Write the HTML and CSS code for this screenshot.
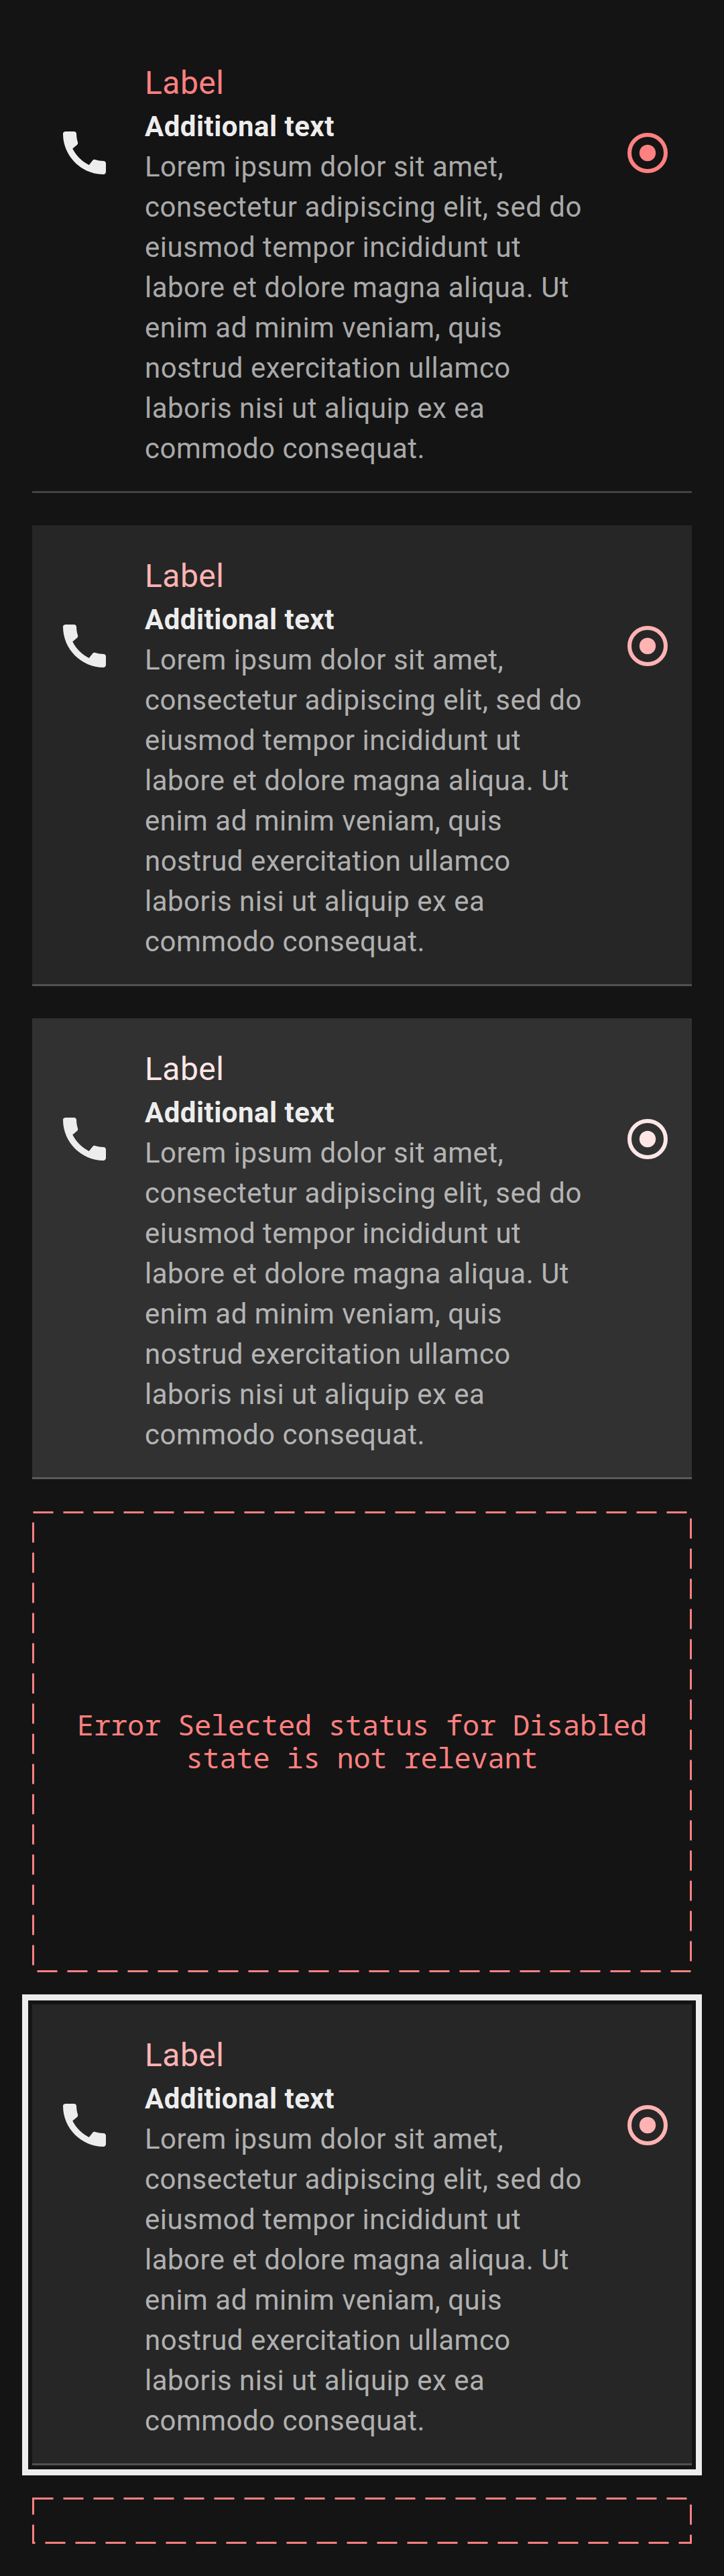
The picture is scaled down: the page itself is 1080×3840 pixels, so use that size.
FILE: index.html
```html
<!DOCTYPE html>
<html lang="en">
<head>
<meta charset="utf-8">
<title>List item states</title>
<link rel="stylesheet" href="styles.css">
</head>
<body>
<svg class="sprite" aria-hidden="true">
  <symbol id="call" viewBox="3 3 18 18"><path d="M20.01 15.38c-1.23 0-2.42-.2-3.53-.56-.35-.12-.74-.03-1.01.24l-1.57 1.97c-2.83-1.35-5.48-3.9-6.89-6.83l1.95-1.66c.27-.28.35-.67.24-1.02-.37-1.11-.56-2.3-.56-3.53 0-.54-.45-.99-.99-.99H4.19C3.65 3 3 3.24 3 3.99 3 13.28 10.73 21 20.01 21c.71 0 .99-.63.99-1.18v-3.45c0-.54-.45-.99-.99-.99z"/></symbol>
  <symbol id="radio" viewBox="0 0 60 60"><circle cx="30" cy="30" r="27" fill="none" stroke="currentColor" stroke-width="6"/><circle cx="30" cy="30" r="12.2"/></symbol>
</svg>
<main class="list">
  <article class="item item--enabled">
    <div class="item__start"><svg class="icon-call"><use href="#call"/></svg></div>
    <div class="item__text">
      <div class="label">Label</div>
      <div class="additional">Additional text</div>
      <p class="description">Lorem ipsum dolor sit amet,<br>consectetur adipiscing elit, sed do<br>eiusmod tempor incididunt ut<br>labore et dolore magna aliqua. Ut<br>enim ad minim veniam, quis<br>nostrud exercitation ullamco<br>laboris nisi ut aliquip ex ea<br>commodo consequat.</p>
    </div>
    <div class="item__end"><svg class="icon-radio"><use href="#radio"/></svg></div>
  </article>
  <article class="item item--hovered">
    <div class="item__start"><svg class="icon-call"><use href="#call"/></svg></div>
    <div class="item__text">
      <div class="label">Label</div>
      <div class="additional">Additional text</div>
      <p class="description">Lorem ipsum dolor sit amet,<br>consectetur adipiscing elit, sed do<br>eiusmod tempor incididunt ut<br>labore et dolore magna aliqua. Ut<br>enim ad minim veniam, quis<br>nostrud exercitation ullamco<br>laboris nisi ut aliquip ex ea<br>commodo consequat.</p>
    </div>
    <div class="item__end"><svg class="icon-radio"><use href="#radio"/></svg></div>
  </article>
  <article class="item item--pressed">
    <div class="item__start"><svg class="icon-call"><use href="#call"/></svg></div>
    <div class="item__text">
      <div class="label">Label</div>
      <div class="additional">Additional text</div>
      <p class="description">Lorem ipsum dolor sit amet,<br>consectetur adipiscing elit, sed do<br>eiusmod tempor incididunt ut<br>labore et dolore magna aliqua. Ut<br>enim ad minim veniam, quis<br>nostrud exercitation ullamco<br>laboris nisi ut aliquip ex ea<br>commodo consequat.</p>
    </div>
    <div class="item__end"><svg class="icon-radio"><use href="#radio"/></svg></div>
  </article>
  <div class="note">
    <svg class="note__frame" viewBox="0 0 984 687"><rect x="1.5" y="1.5" width="981" height="684"/></svg>
    <p class="note__text">Error Selected status for Disabled state is not relevant</p>
  </div>
  <article class="item item--hovered item--focused">
    <div class="item__start"><svg class="icon-call"><use href="#call"/></svg></div>
    <div class="item__text">
      <div class="label">Label</div>
      <div class="additional">Additional text</div>
      <p class="description">Lorem ipsum dolor sit amet,<br>consectetur adipiscing elit, sed do<br>eiusmod tempor incididunt ut<br>labore et dolore magna aliqua. Ut<br>enim ad minim veniam, quis<br>nostrud exercitation ullamco<br>laboris nisi ut aliquip ex ea<br>commodo consequat.</p>
    </div>
    <div class="item__end"><svg class="icon-radio"><use href="#radio"/></svg></div>
  </article>
  <div class="note note--empty">
    <svg class="note__frame" viewBox="0 0 984 69"><rect x="1.5" y="1.5" width="981" height="66"/></svg>
  </div>
</main>
</body>
</html>
```
FILE: styles.css
```css
* { box-sizing: border-box; }
body { margin: 0; background: #141414; font-family: Roboto, sans-serif; }
.sprite { position: absolute; width: 0; height: 0; }

.list {
  display: flex;
  flex-direction: column;
  gap: 48px;
  min-height: 3840px;
  padding: 48px;
}

.item {
  display: flex;
  height: 687px;
  border-bottom: 3px solid var(--line);
  background: var(--fill);
}
.item--enabled { --fill: #141414; --line: #434343; --accent: #ff8080; --muted: #a9a9a9; }
.item--hovered { --fill: #262626; --line: #515151; --accent: #ffb3b3; --muted: #b0b0b0; }
.item--pressed { --fill: #313131; --line: #5a5a5a; --accent: #ffe6e6; --muted: #b4b4b4; }
.item--focused { outline: 9px solid #ededed; outline-offset: 6px; }

.item__start { width: 168px; padding: 148px 0 0 46px; }
.item__text { flex: 1; padding-top: 40px; letter-spacing: 0.48px; white-space: nowrap; }
.item__end { padding: 150px 36px 0 0; }

.icon-call { display: block; width: 64px; height: 64px; fill: #ededed; }
.icon-radio { display: block; width: 60px; height: 60px; color: var(--accent); fill: currentColor; }

.label { font-size: 48px; line-height: 71px; color: var(--accent); }
.additional { font-size: 42px; line-height: 60px; font-weight: 700; color: #ededed; }
.description { margin: 0; font-size: 42px; line-height: 60px; color: var(--muted); }

.note {
  position: relative;
  display: flex;
  align-items: center;
  justify-content: center;
  height: 687px;
  padding: 0 36px 3px;
}
.note--empty { height: 69px; padding: 0; }
.note__frame { position: absolute; inset: 0; width: 100%; height: 100%; }
.note__frame rect { fill: none; stroke: #ff8080; stroke-width: 3; stroke-dasharray: 30 15; }
.note__text {
  margin: 0;
  font: 42px/49px "Noto Sans Mono", "DejaVu Sans Mono", monospace;
  letter-spacing: -0.2px;
  text-align: center;
  color: #ff8080;
}
```
